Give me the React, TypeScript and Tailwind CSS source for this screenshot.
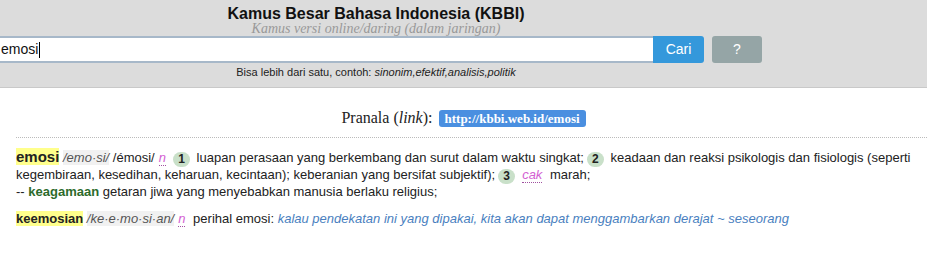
const Num = ({ n }: { n: string }) => (
  <span className="mx-[3px] inline-block h-[15px] min-w-[17px] rounded-full bg-[#c9e0c9] px-[4px] text-center align-[-1px] text-[12px] font-bold leading-[15px] text-[#222]">
    {n}
  </span>
);

const Label = ({ t }: { t: string }) => (
  <abbr className="mx-[4px] italic text-[#d35fd3] no-underline border-b border-dotted border-[#a050a0]">
    {t}
  </abbr>
);

export default function App() {
  return (
    <div className="min-h-[280px] w-[927px] bg-white font-['Liberation_Sans',Arial,sans-serif] text-[#222]">
      {/* Header */}
      <div className="h-[88px] border-b border-[#c9c9c9] bg-[#dcdcdc]">
        <div className="flex w-[762px] flex-col pt-[4px]">
          <div className="w-[752px] text-center">
            <h1 className="text-[16px] font-bold leading-[20px] text-[#111]">
              Kamus Besar Bahasa Indonesia (KBBI)
            </h1>
            <div className="-mt-[3px] font-['Liberation_Serif',serif] text-[14px] italic leading-[16px] text-[#999]">
              Kamus versi online/daring (dalam jaringan)
            </div>
          </div>
          <div className="mt-[-1px] flex w-full items-stretch">
            <div className="flex h-[27px] flex-1 items-center border-y-2 border-[#a7b8c9] bg-white pl-[1px] text-[14px] text-[#111]">
              emosi
              <span className="ml-[1px] inline-block h-[16px] w-px bg-black" />
            </div>
            <button className="h-[27px] w-[51px] rounded-r-[3px] bg-[#3498db] text-[14px] text-white">
              Cari
            </button>
            <button className="ml-[8px] h-[27px] w-[50px] rounded-[3px] bg-[#95a5a6] text-[14px] text-white">
              ?
            </button>
          </div>
          <div className="mt-[2px] w-[752px] text-center text-[11px] leading-[14px] text-[#222]">
            Bisa lebih dari satu, contoh: <i>sinonim,efektif,analisis,politik</i>
          </div>
        </div>
      </div>

      {/* Body */}
      <div className="pl-[16px]">
        <div className="flex items-center justify-center gap-[6px] pt-[20px] pb-[9px] pr-[16px] font-['Liberation_Serif',serif] text-[16px] leading-[20px]">
          <span>
            Pranala (<i>link</i>):
          </span>
          <span className="rounded-[3px] bg-[#4a8fe0] px-[6px] text-[13px] font-bold leading-[17px] text-white">
            http://kbbi.web.id/emosi
          </span>
        </div>
        <div className="border-t border-dotted border-[#bbb] pt-[11px] pr-[4px] text-[13px] leading-[16px]">
          <p>
            <b className="bg-[#ffff8c] text-[15px]">emosi</b>{" "}
            <span className="bg-[#f1f1f1] italic text-[#555]">/emo·si/</span> /émosi/
            <Label t="n" />
            <Num n="1" /> luapan perasaan yang berkembang dan surut dalam waktu singkat;
            <Num n="2" /> keadaan dan reaksi psikologis dan fisiologis (seperti kegembiraan,
            kesedihan, keharuan, kecintaan); keberanian yang bersifat subjektif);
            <Num n="3" />
            <Label t="cak" /> marah;
            <br />
            -- <b className="text-[#2c6b2c]">keagamaan</b> getaran jiwa yang menyebabkan manusia
            berlaku religius;
          </p>
          <p className="mt-[11px]">
            <b className="bg-[#ffff8c]">keemosian</b>{" "}
            <span className="bg-[#f1f1f1] italic text-[#555]">/ke·e·mo·si·an/</span>
            <Label t="n" /> perihal emosi:{" "}
            <i className="text-[#4a7fc0]">
              kalau pendekatan ini yang dipakai, kita akan dapat menggambarkan derajat ~ seseorang
            </i>
          </p>
        </div>
      </div>
    </div>
  );
}
